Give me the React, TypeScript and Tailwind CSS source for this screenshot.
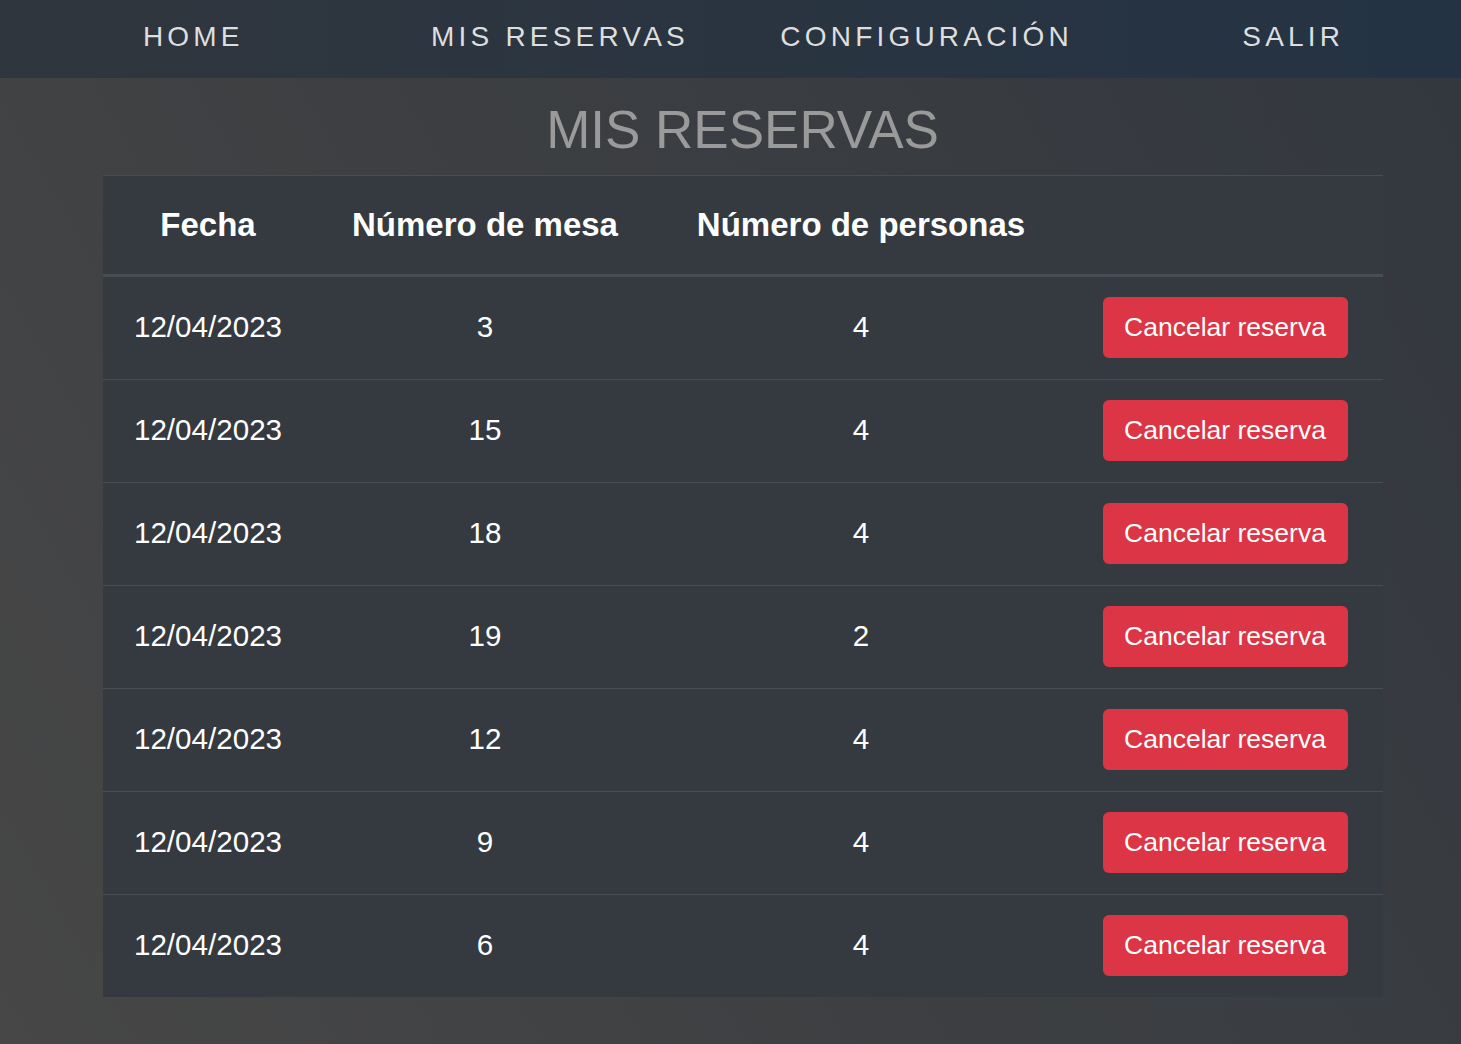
const reservas = [
  { fecha: '12/04/2023', mesa: 3, personas: 4 },
  { fecha: '12/04/2023', mesa: 15, personas: 4 },
  { fecha: '12/04/2023', mesa: 18, personas: 4 },
  { fecha: '12/04/2023', mesa: 19, personas: 2 },
  { fecha: '12/04/2023', mesa: 12, personas: 4 },
  { fecha: '12/04/2023', mesa: 9, personas: 4 },
  { fecha: '12/04/2023', mesa: 6, personas: 4 },
];

const links = ['HOME', 'MIS RESERVAS', 'CONFIGURACIÓN', 'SALIR'];

export default function App() {
  return (
    <div
      className="min-h-[1044px] w-full overflow-hidden bg-[linear-gradient(60deg,#474747_0%,#3d3f42_45%,#33383f_100%)]"
      style={{ fontFamily: '"Liberation Sans", Arial, sans-serif' }}
    >
      <nav className="h-[78px] pb-[2px] bg-[linear-gradient(90deg,#30363d,#243344)] flex items-center">
        <ul className="grid grid-cols-[repeat(4,366.67px)] pl-[10px] w-full">
          {links.map((link) => (
            <li key={link} className="text-center">
              <a href="#" className="text-[28px] tracking-[4.2px] text-[#dedede] leading-none">
                {link}
              </a>
            </li>
          ))}
        </ul>
      </nav>

      <h1 className="mt-[20px] mb-[13px] pl-[24px] text-center text-[53px] leading-[1.2] text-[#9a9a9a]">
        MIS RESERVAS
      </h1>

      <div className="mx-[103px] w-[1280px] bg-[#343a40] border-t border-[#454d55] text-white">
        <div className="grid grid-cols-[210px_344px_408px_318px] h-[101px] items-center border-b-[3px] border-[#454d55] text-[33px] font-bold text-center">
          <div>Fecha</div>
          <div>Número de mesa</div>
          <div>Número de personas</div>
          <div></div>
        </div>
        {reservas.map((r, i) => (
          <div
            key={i}
            className={`grid grid-cols-[210px_344px_408px_318px] items-center text-center text-[29.6px] ${
              i < reservas.length - 1 ? 'h-[103px] border-b border-[#454d55]' : 'h-[102px]'
            }`}
          >
            <div>{r.fecha}</div>
            <div>{r.mesa}</div>
            <div>{r.personas}</div>
            <div className="flex justify-center pl-[2px]">
              <button className="w-[245px] h-[61px] rounded-[6px] bg-[#dc3545] text-white text-[26.5px]">
                Cancelar reserva
              </button>
            </div>
          </div>
        ))}
      </div>
    </div>
  );
}
